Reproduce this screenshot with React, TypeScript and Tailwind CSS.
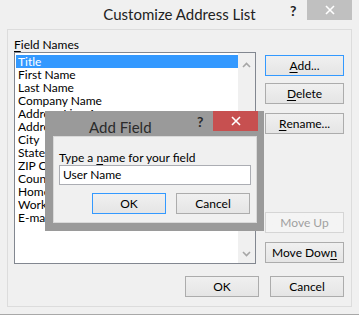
import React from "react";

const FONT = "font-['Segoe_UI','Lato','Open_Sans',sans-serif]";

const fields = [
  "Title",
  "First Name",
  "Last Name",
  "Company Name",
  "Address Line 1",
  "Address Line 2",
  "City",
  "State",
  "ZIP Code",
  "Country",
  "Home Phone",
  "Work Phone",
  "E-mail Address",
];

type BtnProps = {
  children: React.ReactNode;
  className?: string;
  primary?: boolean;
  disabled?: boolean;
};

function Btn({ children, className = "", primary, disabled }: BtnProps) {
  return (
    <button
      type="button"
      className={`flex h-[21px] items-center justify-center border bg-gradient-to-b from-[#f0f0f0] to-[#e5e5e5] text-[12px] leading-none ${
        primary ? "border-[#3399ff]" : "border-[#acacac]"
      } ${disabled ? "border-[#d5d5d5] from-[#f4f4f4] to-[#f4f4f4] text-[#a0a0a0]" : "text-black"} ${className}`}
    >
      {children}
    </button>
  );
}

function Chevron({ up }: { up?: boolean }) {
  return (
    <svg width="9" height="6" viewBox="0 0 9 6">
      <path
        d={up ? "M1 5 L4.5 1.5 L8 5" : "M1 1 L4.5 4.5 L8 1"}
        fill="none"
        stroke="#a6a6a6"
        strokeWidth="1.6"
      />
    </svg>
  );
}

function CloseX({ size = 10 }: { size?: number }) {
  return (
    <svg width={size} height={size} viewBox="0 0 10 10">
      <path d="M1 1 L9 9 M9 1 L1 9" stroke="#fff" strokeWidth="1.6" />
    </svg>
  );
}

export default function App() {
  return (
    <div className={`relative h-[315px] w-[359px] overflow-hidden border-b border-[#a8a8a8] bg-[#f0f0f0] ${FONT} text-black`}>
      {/* title bar */}
      <div className="relative h-[29px]">
        <div className="pt-[3px] text-center text-[15px] leading-[22px] text-[#222]">
          Customize Address List
        </div>
        <div className="absolute left-[290px] top-[2px] text-[14px] font-bold leading-[18px] text-[#222]">?</div>
        <div className="absolute left-[307px] top-0 flex h-[20px] w-[45px] items-center justify-center bg-[#c0c0c0]">
          <CloseX />
        </div>
      </div>

      {/* main panel */}
      <div className="mx-[7px] h-[278px] border border-[#dcdcdc]">
        <div className="flex pl-[6px] pt-[7px]">
          <div className="w-[242px]">
            <div className="text-[12px] leading-[15px]">
              <span className="underline underline-offset-2">F</span>ield Names
            </div>
            <div className="flex h-[212px] border border-[#828790] bg-white">
              <div className="flex-1 pl-[1px] pt-[2px]">
                {fields.map((f, i) => (
                  <div
                    key={f}
                    className={`h-[13px] overflow-hidden whitespace-nowrap pl-[2px] text-[12px] leading-[13px] ${
                      i === 0 ? "bg-[#3399ff] text-white" : ""
                    }`}
                  >
                    {f}
                  </div>
                ))}
              </div>
              <div className="flex w-[17px] flex-col items-center justify-between bg-[#f0f0f0] pb-[6px] pt-[9px]">
                <Chevron up />
                <Chevron />
              </div>
            </div>
          </div>
          <div className="ml-[9px] flex w-[79px] flex-col pt-[18px]">
            <Btn primary>
              <span className="underline underline-offset-2">A</span>dd...
            </Btn>
            <Btn className="mt-[7px]">
              <span className="underline underline-offset-2">D</span>elete
            </Btn>
            <Btn className="mt-[9px]">
              <span className="underline underline-offset-2">R</span>ename...
            </Btn>
            <Btn disabled className="mt-[78px]">
              Move Up
            </Btn>
            <Btn className="mt-[9px]">
              Move Dow<span className="underline underline-offset-2">n</span>
            </Btn>
          </div>
        </div>
        <div className="mt-[12px] flex justify-end gap-[11px] pr-[7px]">
          <Btn className="w-[74px]">OK</Btn>
          <Btn className="w-[74px]">Cancel</Btn>
        </div>
      </div>

      {/* Add Field dialog */}
      <div className="absolute left-[45px] top-[111px] flex h-[120px] w-[219px] flex-col bg-[#9a9a9a] px-[7px] pb-[8px] pl-[8px]">
        <div className="relative h-[25px]">
          <div className="absolute left-[36px] top-[6px] text-[15px] leading-[20px] text-[#2b2b2b]">Add Field</div>
          <div className="absolute left-[144px] top-[2px] text-[14px] font-bold leading-[18px] text-[#2b2b2b]">?</div>
          <div className="absolute right-[-1px] top-0 flex h-[20px] w-[45px] items-center justify-center bg-[#c75050]">
            <CloseX />
          </div>
        </div>
        <div className="flex-1 border border-[#d9d9d9] bg-[#f0f0f0] px-[5px] pt-[13px]">
          <div className="text-[12px] leading-[15px]">
            Type a <span className="underline underline-offset-2">n</span>ame for your field
          </div>
          <div className="h-[20px] w-[192px] border border-[#abadb3] bg-white pl-[3px] text-[12px] leading-[18px]">
            User Name
          </div>
          <div className="mt-[8px] flex gap-[10px] pl-[33px]">
            <Btn primary className="w-[74px]">OK</Btn>
            <Btn className="w-[74px]">Cancel</Btn>
          </div>
        </div>
      </div>
    </div>
  );
}
